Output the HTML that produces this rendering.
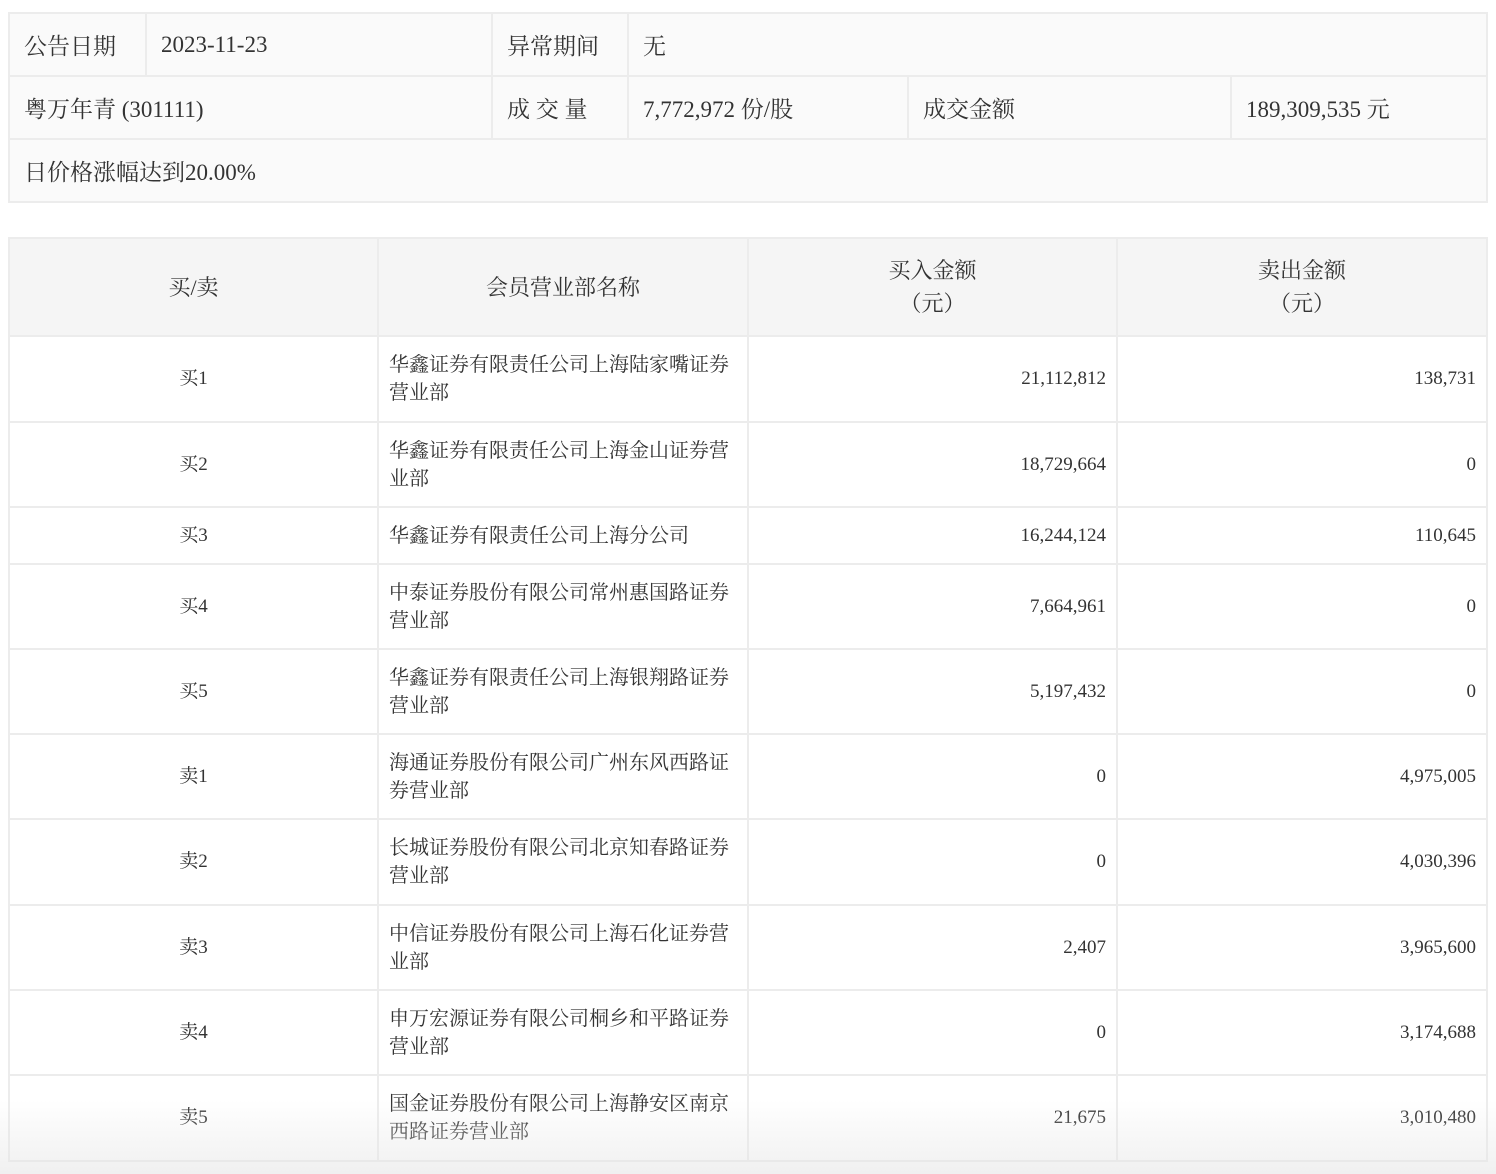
<!DOCTYPE html>
<html><head><meta charset="utf-8">
<style>
html,body{margin:0;padding:0;background:#fff;width:1496px;height:1174px;overflow:hidden;position:relative}
body{font-family:"Liberation Serif","Noto Serif CJK SC",serif;color:#333}
table{border-collapse:collapse;table-layout:fixed;position:absolute;left:8px}
td{border:2px solid #ececec;padding:0;box-sizing:border-box}
#t1{top:12px;width:1478px;background:#fafafa;font-size:23px}
#t1 td{height:63px;padding-left:14px;vertical-align:middle}
#t2{top:237px;width:1478px;font-size:20px}
#t2 th{background:#f5f5f5;border:2px solid #ececec;font-weight:normal;font-size:22px;height:98px;padding:0;line-height:33px;color:#333;box-sizing:border-box}
#t2 td{vertical-align:middle;line-height:28px}
#t2 td.c{text-align:center;font-size:19px}
#t2 td.n{padding-left:10px;padding-right:12px}
#t2 td.r{text-align:right;padding-right:10px;font-size:19px}
.fade{position:absolute;left:0;top:1100px;width:1496px;height:74px;background:linear-gradient(rgba(230,230,230,0),rgba(230,230,230,0.6));pointer-events:none}
</style></head><body>
<table id="t1">
<colgroup><col style="width:137px"><col style="width:346px"><col style="width:136px"><col style="width:280px"><col style="width:323px"><col style="width:256px"></colgroup>
<tr><td>公告日期</td><td>2023-11-23</td><td>异常期间</td><td colspan="3">无</td></tr>
<tr><td colspan="2">粤万年青 (301111)</td><td>成 交 量</td><td>7,772,972 份/股</td><td>成交金额</td><td>189,309,535 元</td></tr>
<tr><td colspan="6">日价格涨幅达到20.00%</td></tr>
</table>
<table id="t2">
<colgroup><col style="width:369px"><col style="width:370px"><col style="width:369px"><col style="width:370px"></colgroup>
<tr><th>买/卖</th><th>会员营业部名称</th><th>买入金额<br>（元）</th><th>卖出金额<br>（元）</th></tr>
<tr style="height:86px"><td class="c">买1</td><td class="n">华鑫证券有限责任公司上海陆家嘴证券营业部</td><td class="r">21,112,812</td><td class="r">138,731</td></tr>
<tr style="height:85px"><td class="c">买2</td><td class="n">华鑫证券有限责任公司上海金山证券营业部</td><td class="r">18,729,664</td><td class="r">0</td></tr>
<tr style="height:57px"><td class="c">买3</td><td class="n">华鑫证券有限责任公司上海分公司</td><td class="r">16,244,124</td><td class="r">110,645</td></tr>
<tr style="height:85px"><td class="c">买4</td><td class="n">中泰证券股份有限公司常州惠国路证券营业部</td><td class="r">7,664,961</td><td class="r">0</td></tr>
<tr style="height:85px"><td class="c">买5</td><td class="n">华鑫证券有限责任公司上海银翔路证券营业部</td><td class="r">5,197,432</td><td class="r">0</td></tr>
<tr style="height:85px"><td class="c">卖1</td><td class="n">海通证券股份有限公司广州东风西路证券营业部</td><td class="r">0</td><td class="r">4,975,005</td></tr>
<tr style="height:86px"><td class="c">卖2</td><td class="n">长城证券股份有限公司北京知春路证券营业部</td><td class="r">0</td><td class="r">4,030,396</td></tr>
<tr style="height:85px"><td class="c">卖3</td><td class="n">中信证券股份有限公司上海石化证券营业部</td><td class="r">2,407</td><td class="r">3,965,600</td></tr>
<tr style="height:85px"><td class="c">卖4</td><td class="n">申万宏源证券有限公司桐乡和平路证券营业部</td><td class="r">0</td><td class="r">3,174,688</td></tr>
<tr style="height:86px"><td class="c">卖5</td><td class="n">国金证券股份有限公司上海静安区南京西路证券营业部</td><td class="r">21,675</td><td class="r">3,010,480</td></tr>
</table>
<div class="fade"></div>
</body></html>
